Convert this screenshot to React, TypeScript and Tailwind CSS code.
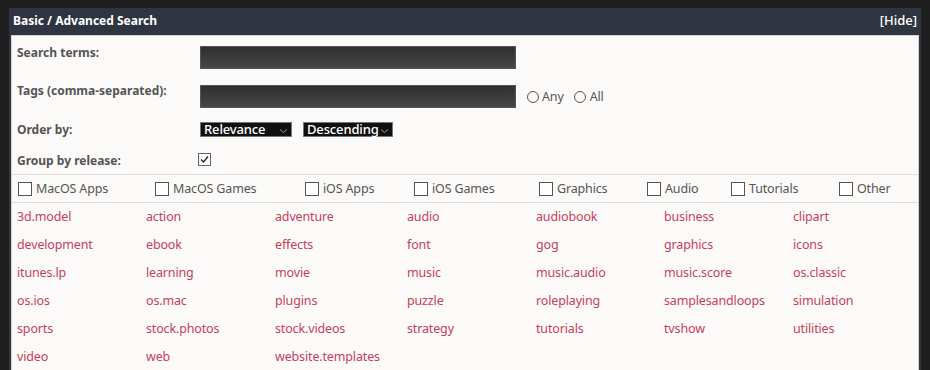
import React from "react";

const tags = [
  "3d.model","action","adventure","audio","audiobook","business","clipart",
  "development","ebook","effects","font","gog","graphics","icons",
  "itunes.lp","learning","movie","music","music.audio","music.score","os.classic",
  "os.ios","os.mac","plugins","puzzle","roleplaying","samplesandloops","simulation",
  "sports","stock.photos","stock.videos","strategy","tutorials","tvshow","utilities",
  "video","web","website.templates",
];

const cats: [string, string][] = [
  ["MacOS Apps", "w-[137px]"],
  ["MacOS Games", "w-[150px]"],
  ["iOS Apps", "w-[109px]"],
  ["iOS Games", "w-[125px]"],
  ["Graphics", "w-[108px]"],
  ["Audio", "w-[84px]"],
  ["Tutorials", "w-[108px]"],
  ["Other", "w-[60px]"],
];

function Select({ label, w }: { label: string; w: string }) {
  return (
    <div className={`${w} h-[15px] bg-[#111] border border-[#777] flex items-center justify-between pl-[3px] pr-[3px] text-white text-[13px] leading-none`}>
      <span className="font-medium">{label}</span>
      <svg width="9" height="6" viewBox="0 0 9 6" className="mt-[2px]">
        <path d="M1 1.5 L4.5 4.5 L8 1.5" fill="none" stroke="#999" strokeWidth="1" />
      </svg>
    </div>
  );
}

export default function App() {
  return (
    <div className="w-[930px] h-[370px] bg-[#1f1f1f] overflow-hidden pt-[8px] pl-[9px]" style={{ fontFamily: '"Noto Sans", "Open Sans", sans-serif' }}>
      <div className="w-[912px] h-[400px] bg-[#2f3540]">
        <div className="h-[25px] flex items-center justify-between pl-[4px] pr-[4px] text-white">
          <span className="font-bold text-[12px]">Basic / Advanced Search</span>
          <span className="text-[13px] font-medium">[Hide]</span>
        </div>
        <div className="mx-[2px] mt-[2px] bg-[#fbfaf8] border border-[#d4d4d4] text-[12.5px] tracking-[-0.15px] leading-[18px]">
          <div className="px-[5px]">
            <div className="flex h-[39px]">
              <div className="w-[183px] pt-[8px] font-bold text-[12px] tracking-normal text-[#555]">Search terms:</div>
              <div className="mt-[10px] w-[316px] h-[23px] border border-[#555] bg-gradient-to-b from-[#2f2f2f] to-[#474747]" />
            </div>
            <div className="flex h-[39px]">
              <div className="w-[183px] pt-[7px] font-bold text-[12px] tracking-normal text-[#555]">Tags (comma-separated):</div>
              <div className="mt-[10px] w-[316px] h-[23px] border border-[#555] bg-gradient-to-b from-[#2f2f2f] to-[#474747]" />
              <div className="flex items-center mt-[13px] h-[18px] ml-[11px] text-[#555]">
                <span className="w-[12px] h-[12px] rounded-full border border-[#555] mr-[3px]" />
                <span>Any</span>
                <span className="w-[12px] h-[12px] rounded-full border border-[#555] ml-[10px] mr-[4px]" />
                <span>All</span>
              </div>
            </div>
            <div className="flex h-[31px]">
              <div className="w-[183px] pt-[7px] font-bold text-[12px] tracking-normal text-[#555]">Order by:</div>
              <div className="flex mt-[8px] gap-[11px]">
                <Select label="Relevance" w="w-[92px]" />
                <Select label="Descending" w="w-[90px]" />
              </div>
            </div>
            <div className="flex h-[29px]">
              <div className="w-[181px] pt-[7px] font-bold text-[12px] tracking-normal text-[#555]">Group by release:</div>
              <div className="mt-[8px] w-[13px] h-[13px] border border-[#666] bg-white flex items-center justify-center">
                <svg width="11" height="11" viewBox="0 0 11 11">
                  <path d="M2 5.5 L4.5 8 L9 2.5" fill="none" stroke="#222" strokeWidth="1.3" />
                </svg>
              </div>
            </div>
          </div>
          <div className="border-t border-[#ddd] h-[28px] flex items-center px-[6px] text-[#555]">
            {cats.map(([c, w]) => (
              <div key={c} className={`${w} flex items-center shrink-0`}>
                <span className="w-[14px] h-[14px] border border-[#555] bg-white mr-[4px]" />
                <span>{c}</span>
              </div>
            ))}
          </div>
          <div className="border-t border-[#ddd] px-[5px] grid grid-cols-[129px_129px_132px_129px_128px_129px_129px]">
            {tags.map((t) => (
              <div key={t} className="h-[28px] pt-[2px] leading-[24px] text-[#c6405d]">{t}</div>
            ))}
          </div>
        </div>
      </div>
    </div>
  );
}
